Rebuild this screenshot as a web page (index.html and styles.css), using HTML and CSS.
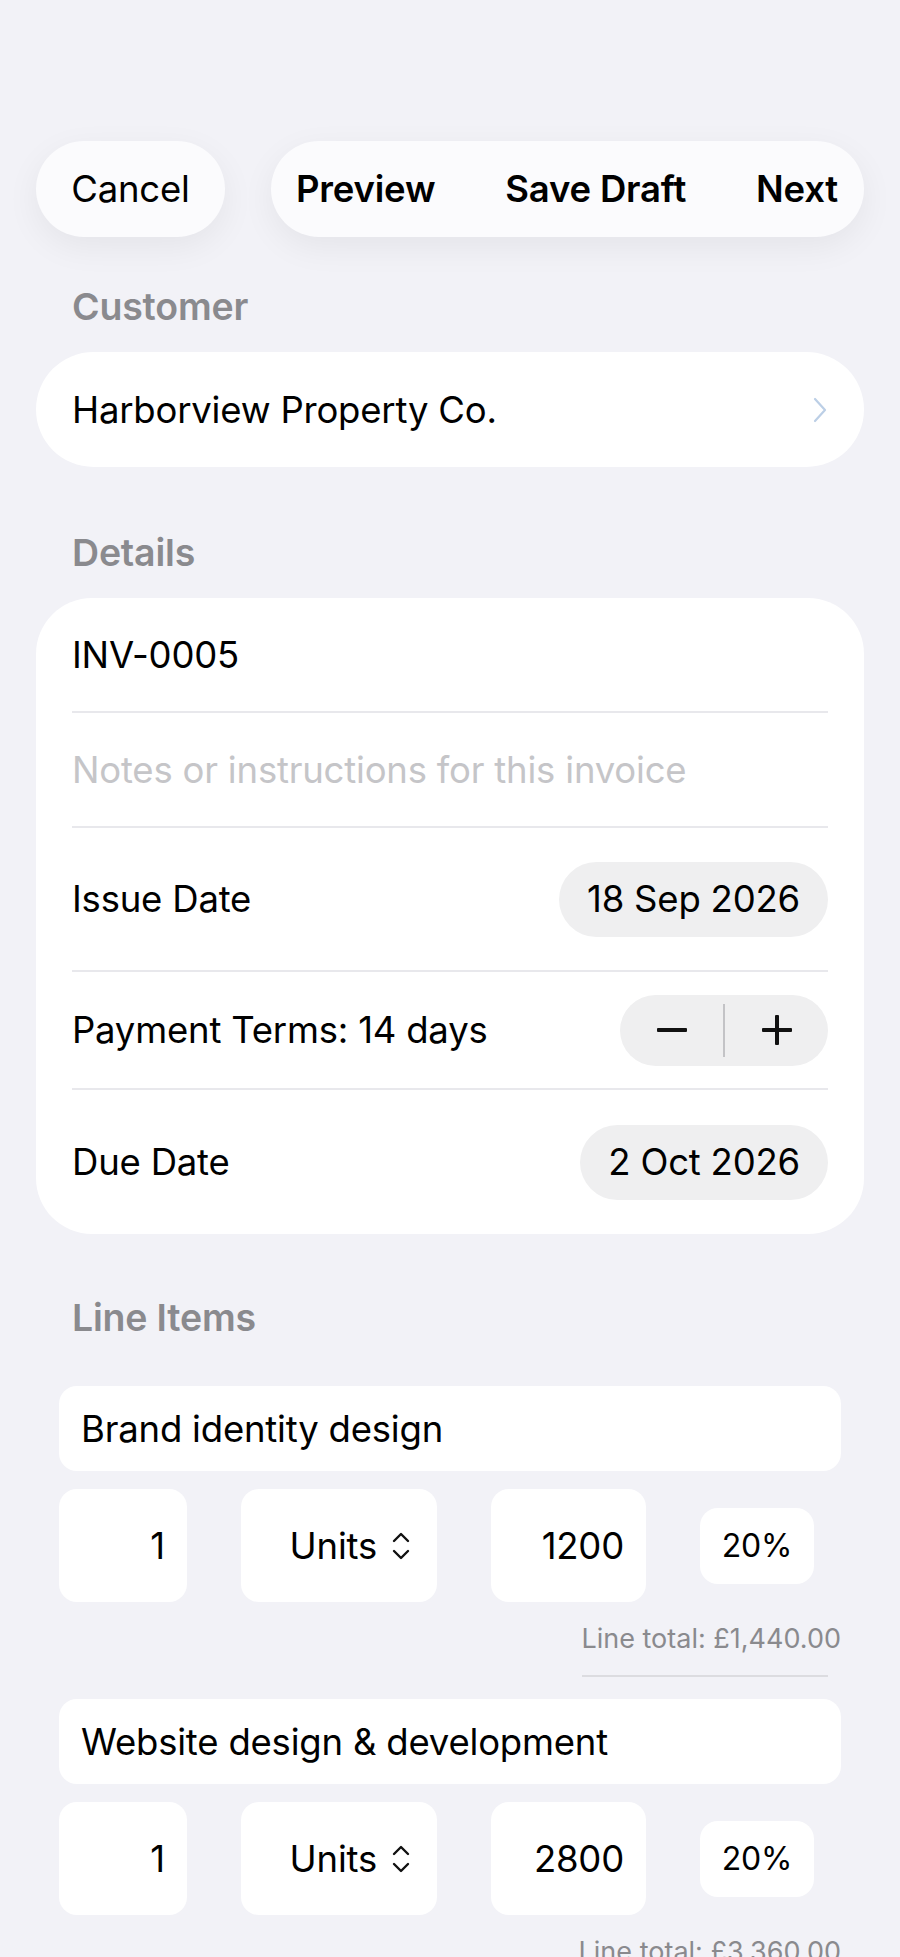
FILE: index.html
```html
<!DOCTYPE html>
<html lang="en">
<head>
  <meta charset="UTF-8">
  <title>New Invoice</title>
  <link rel="stylesheet" href="styles.css">
</head>
<body>
  <div class="screen">

    <!-- top bar -->
    <header class="toolbar">
      <button class="pill cancel">Cancel</button>
      <div class="pill actions">
        <button>Preview</button>
        <button>Save Draft</button>
        <button>Next</button>
      </div>
    </header>

    <h2 class="group-title first">Customer</h2>
    <div class="customer">
      <span>Harborview Property Co.</span>
      <svg class="chevron" width="16" height="26" viewBox="0 0 16 26">
        <path d="M3 2 L13 13 L3 24" fill="none" stroke="#bccfe6" stroke-width="2.2" stroke-linecap="round" stroke-linejoin="round"/>
      </svg>
    </div>

    <h2 class="group-title">Details</h2>
    <div class="card">
      <div class="row">INV-0005</div>
      <div class="row placeholder">Notes or instructions for this invoice</div>
      <div class="row tall">
        <span>Issue Date</span>
        <span class="date-pill">18 Sep 2026</span>
      </div>
      <div class="row stepper-row">
        <span>Payment Terms: 14 days</span>
        <div class="stepper">
          <button class="step minus"><span></span></button>
          <i class="step-divider"></i>
          <button class="step plus"><span></span></button>
        </div>
      </div>
      <div class="row tall">
        <span>Due Date</span>
        <span class="date-pill">2 Oct 2026</span>
      </div>
    </div>

    <h2 class="group-title items-title">Line Items</h2>
    <div class="items">
      <div class="line-item">
        <div class="field desc">Brand identity design</div>
        <div class="fields">
          <div class="field num">1</div>
          <div class="field unit">Units
            <svg width="20" height="30" viewBox="0 0 20 30"><path d="M3 10 L10 3 L17 10 M3 20 L10 27 L17 20" fill="none" stroke="#111" stroke-width="2.4" stroke-linecap="round" stroke-linejoin="round"/></svg>
          </div>
          <div class="field num">1200</div>
          <div class="field tax">20%</div>
        </div>
        <div class="total">
          <span>Line total: £1,440.00</span>
          <i class="total-rule"></i>
        </div>
      </div>

      <div class="line-item">
        <div class="field desc">Website design &amp; development</div>
        <div class="fields">
          <div class="field num">1</div>
          <div class="field unit">Units
            <svg width="20" height="30" viewBox="0 0 20 30"><path d="M3 10 L10 3 L17 10 M3 20 L10 27 L17 20" fill="none" stroke="#111" stroke-width="2.4" stroke-linecap="round" stroke-linejoin="round"/></svg>
          </div>
          <div class="field num">2800</div>
          <div class="field tax">20%</div>
        </div>
        <div class="total">
          <span>Line total: £3,360.00</span>
          <i class="total-rule"></i>
        </div>
      </div>
    </div>

  </div>
</body>
</html>
```

FILE: styles.css
```css
* {
  box-sizing: border-box;
}

body {
  margin: 0;
  background-color: #f2f2f7;
  font-family: Inter, "Noto Sans", sans-serif;
  font-size: 36.5px;
  letter-spacing: -0.2px;
  color: #000;
}

button {
  font: inherit;
  letter-spacing: inherit;
  color: inherit;
  background: none;
  border: 0;
  padding: 0;
}

.screen {
  padding: 141px 36px 0;
  height: 1957px;
  overflow: hidden;
}

/* top bar */
.toolbar {
  display: flex;
  justify-content: space-between;
  height: 96px;
}
.pill {
  height: 96px;
  border-radius: 48px;
  background-color: #fbfbfd;
  box-shadow: 0 10px 34px rgba(0,0,0,0.06);
}
.cancel {
  width: 189px;
}
.actions {
  width: 593px;
  display: flex;
  justify-content: space-between;
  align-items: center;
  padding: 0 26px 0 25px;
}
.actions button {
  font-weight: 600;
}

/* section titles */
.group-title {
  margin: 64px 0 23px;
  padding-left: 36px;
  font-size: 37.5px;
  line-height: 44px;
  font-weight: 600;
  color: #8a8a8e;
}
.group-title.first {
  margin-top: 48px;
}
.group-title.items-title {
  margin-top: 62px;
  margin-bottom: 46px;
}

/* customer */
.customer {
  height: 115px;
  border-radius: 58px;
  background-color: #fff;
  display: flex;
  justify-content: space-between;
  align-items: center;
  padding: 0 36px;
}

/* details */
.card {
  background-color: #fff;
  border-radius: 56px;
  padding: 0 36px;
}
.row {
  min-height: 115px;
  display: flex;
  justify-content: space-between;
  align-items: center;
  border-bottom: 2px solid #e8e8ec;
}
.row:last-child {
  border-bottom: 0;
}
.row.tall {
  min-height: 144px;
}
.row.stepper-row {
  min-height: 118px;
}
.placeholder {
  color: #c5c5c8;
}
.date-pill {
  height: 75px;
  line-height: 75px;
  padding: 0 28px;
  border-radius: 38px;
  background-color: #efeff0;
}

.stepper {
  width: 208px;
  height: 71px;
  border-radius: 36px;
  background-color: #efeff0;
  display: flex;
  align-items: center;
}
.step {
  flex: 1;
  height: 71px;
  position: relative;
}
.step span,
.step.plus::after {
  position: absolute;
  left: 50%;
  top: 50%;
  width: 30px;
  height: 4px;
  margin: -2px 0 0 -15px;
  background-color: #111;
  border-radius: 1px;
}
.step.plus::after {
  content: "";
  transform: rotate(90deg);
}
.step-divider {
  width: 2px;
  height: 53px;
  background-color: #c3c3c6;
}

/* line items */
.items {
  padding: 0 23px;
}
.field {
  background-color: #fff;
  border-radius: 18px;
  display: flex;
  align-items: center;
}
.desc {
  height: 85px;
  padding: 0 22px;
  margin-bottom: 18px;
}
.fields {
  display: grid;
  grid-template-columns: 128px 196px 155px 114px;
  column-gap: 54px;
  align-items: center;
}
.field.num {
  height: 113px;
  justify-content: flex-end;
  padding-right: 22px;
}
.field.unit {
  height: 113px;
  justify-content: flex-end;
  padding-right: 26px;
  gap: 14px;
}
.field.tax {
  height: 76px;
  justify-content: center;
  font-size: 32px;
}
.total {
  display: flex;
  flex-direction: column;
  align-items: flex-end;
  margin-top: 20px;
  margin-bottom: 22px;
  font-size: 27px;
  line-height: 34px;
  letter-spacing: 0;
  color: #8a8a8e;
}
.total-rule {
  width: 246px;
  height: 2px;
  margin: 19px 13px 0 0;
  background-color: #dcdce0;
}
```
